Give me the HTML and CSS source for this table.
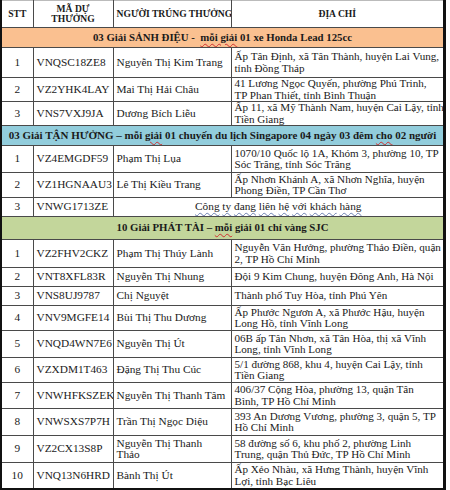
FILE: index.html
```html
<!DOCTYPE html>
<html lang="vi">
<head>
<meta charset="utf-8">
<link rel="stylesheet" href="styles.css">
</head>
<body>
<table class="prizes">
  <colgroup>
    <col class="c-stt"><col class="c-code"><col class="c-name"><col class="c-addr">
  </colgroup>
  <thead>
    <tr class="head">
      <th>STT</th>
      <th>MÃ DỰ<br>THƯỞNG</th>
      <th>NGƯỜI TRÚNG THƯỞNG</th>
      <th>ĐỊA CHỈ</th>
    </tr>
  </thead>
  <tbody>
    <tr class="band orange"><td colspan="4">03 Giải SẢNH ĐIỆU -&nbsp; <span class="sq">mỗi giải</span> 01 xe Honda Lead 125cc</td></tr>
    <tr class="r30"><td class="stt">1</td><td>VNQSC18ZE8</td><td>Nguyễn Thị Kim Trang</td><td class="addr">Ấp Tân Định, xã Tân Thành, huyện Lai Vung,<br>tỉnh Đồng Tháp</td></tr>
    <tr class="r24"><td class="stt">2</td><td>VZ2YHK4LAY</td><td>Mai Thị Hải Châu</td><td class="addr">41 Lương Ngọc Quyến, phường Phú Trinh,<br>TP Phan Thiết, tỉnh Bình Thuận</td></tr>
    <tr class="r24"><td class="stt">3</td><td>VNS7VXJ9JA</td><td>Dương Bích Liễu</td><td class="addr">Ấp 11, xã Mỹ Thành Nam, huyện Cai Lậy, tỉnh<br>Tiền Giang</td></tr>

    <tr class="band blue"><td colspan="4">03 Giải TẬN HƯỞNG – mỗi <span class="sq">giải</span> 01 chuyến du lịch Singapore 04 ngày 03 đêm <span class="sq">cho</span> 02 người</td></tr>
    <tr class="r27"><td class="stt">1</td><td>VZ4EMGDF59</td><td>Phạm Thị Lụa</td><td class="addr">1070/10 Quốc lộ 1A, Khóm 3, phường 10, TP<br>Sóc Trăng, tỉnh Sóc Trăng</td></tr>
    <tr class="r25"><td class="stt">2</td><td>VZ1HGNAAU3</td><td>Lê Thị Kiều Trang</td><td class="addr">Ấp Nhơn Khánh A, xã Nhơn Nghĩa, huyện<br>Phong Điền, TP Cần Thơ</td></tr>
    <tr class="r19"><td class="stt">3</td><td>VNWG1713ZE</td><td colspan="2" class="center"><span class="sqb">Công</span> <span class="sqb">ty</span> <span class="sqb">đang</span> <span class="sqb">liên</span> <span class="sqb">hệ</span> <span class="sqb">với</span> <span class="sqb">khách</span> <span class="sqb">hàng</span></td></tr>

    <tr class="band green"><td colspan="4">10 Giải PHÁT TÀI – <span class="sq">mỗi</span> giải 01 chỉ vàng SJC</td></tr>
    <tr class="r28"><td class="stt">1</td><td>VZ2FHV2CKZ</td><td>Phạm Thị Thúy Lành</td><td class="addr">Nguyễn Văn Hưởng, phường Thảo Điền, quận<br>2, TP Hồ Chí Minh</td></tr>
    <tr class="r19"><td class="stt">2</td><td>VNT8XFL83R</td><td>Nguyễn Thị Nhung</td><td class="addr">Đội 9 Kim Chung, huyện Đông Anh, Hà Nội</td></tr>
    <tr class="r19"><td class="stt">3</td><td>VNS8UJ9787</td><td>Chị Nguyệt</td><td class="addr">Thành phố Tuy Hòa, tỉnh Phú Yên</td></tr>
    <tr class="r25"><td class="stt">4</td><td>VNV9MGFE14</td><td>Bùi Thị Thu Dương</td><td class="addr">Ấp Phước Ngươn A, xã Phước Hậu, huyện<br>Long Hồ, tỉnh Vĩnh Long</td></tr>
    <tr class="r27"><td class="stt">5</td><td>VNQD4WN7E6</td><td>Nguyễn Thị Út</td><td class="addr">06B ấp Tân Nhơn, xã Tân Hòa, thị xã Vĩnh<br>Long, tỉnh Vĩnh Long</td></tr>
    <tr class="r25"><td class="stt">6</td><td>VZXDM1T463</td><td>Đặng Thị Thu Cúc</td><td class="addr">5/1 đường 868, khu 4, huyện Cai Lậy, tỉnh<br>Tiền Giang</td></tr>
    <tr class="r26"><td class="stt">7</td><td>VNWHFKSZEK</td><td>Nguyễn Thị Thanh Tâm</td><td class="addr">406/37 Cộng Hòa, phường 13, quận Tân<br>Bình, TP Hồ Chí Minh</td></tr>
    <tr class="r27"><td class="stt">8</td><td>VNWSXS7P7H</td><td>Trần Thị Ngọc Diệu</td><td class="addr">393 An Dương Vương, phường 3, quận 5, TP<br>Hồ Chí Minh</td></tr>
    <tr class="r27"><td class="stt">9</td><td>VZ2CX13S8P</td><td>Nguyễn Thị Thanh<br>Thảo</td><td class="addr">58 đường số 6, khu phố 2, phường Linh<br>Trung, quận Thủ Đức, TP Hồ Chí Minh</td></tr>
    <tr class="r26"><td class="stt">10</td><td>VNQ13N6HRD</td><td>Bành Thị Út</td><td class="addr">Ấp Xẻo Nhàu, xã Hưng Thành, huyện Vĩnh<br>Lợi, tỉnh Bạc Liêu</td></tr>
  </tbody>
</table>
</body>
</html>
```

FILE: styles.css
```css
html, body {
  margin: 0;
  padding: 0;
  background: #ffffff;
}

.prizes {
  border-collapse: collapse;
  table-layout: fixed;
  width: 446px;
  font-family: "Liberation Serif", "DejaVu Serif", serif;
  font-size: 11.3px;
  color: #1a1a1a;
  border-left: 2px solid #111;
  border-right: 3px solid #111;
  border-bottom: 3px solid #111;
}

.c-stt { width: 32px; }
.c-code { width: 80px; }
.c-name { width: 118px; }
.c-addr { width: auto; }

.prizes th,
.prizes td {
  border: 1px solid #4a4a4a;
  padding: 0 3px;
  line-height: 11.5px;
  vertical-align: middle;
  text-align: left;
  overflow: hidden;
  white-space: nowrap;
}

.prizes td.addr {
  padding: 0 0 0 3px;
  font-size: 11.1px;
}

.head th {
  height: 26px;
  font-size: 9.6px;
  font-weight: bold;
  text-align: center;
  line-height: 10px;
  border-top-color: #bbb;
}

.band td {
  font-weight: bold;
  text-align: center;
  font-size: 10.8px;
  height: 19px;
}

.orange td { background: #fac090; }
.blue td { background: #92cddc; font-size: 11px; }
.green td { background: #c3d69b; height: 22px; }

.prizes td.stt { text-align: center; }
.prizes td.center { text-align: center; }

.r19 td { height: 18px; }
.r24 td { height: 23px; }
.r25 td { height: 24px; }
.r26 td { height: 25px; }
.r27 td { height: 26px; }
.r28 td { height: 27px; }
.r30 td { height: 29px; }

.sq {
  text-decoration: underline wavy #d03030;
  text-decoration-thickness: 1px;
  text-underline-offset: 2px;
}

.sqb {
  text-decoration: underline wavy #6a7fb0;
  text-decoration-thickness: 1px;
  text-underline-offset: 2px;
}
```
